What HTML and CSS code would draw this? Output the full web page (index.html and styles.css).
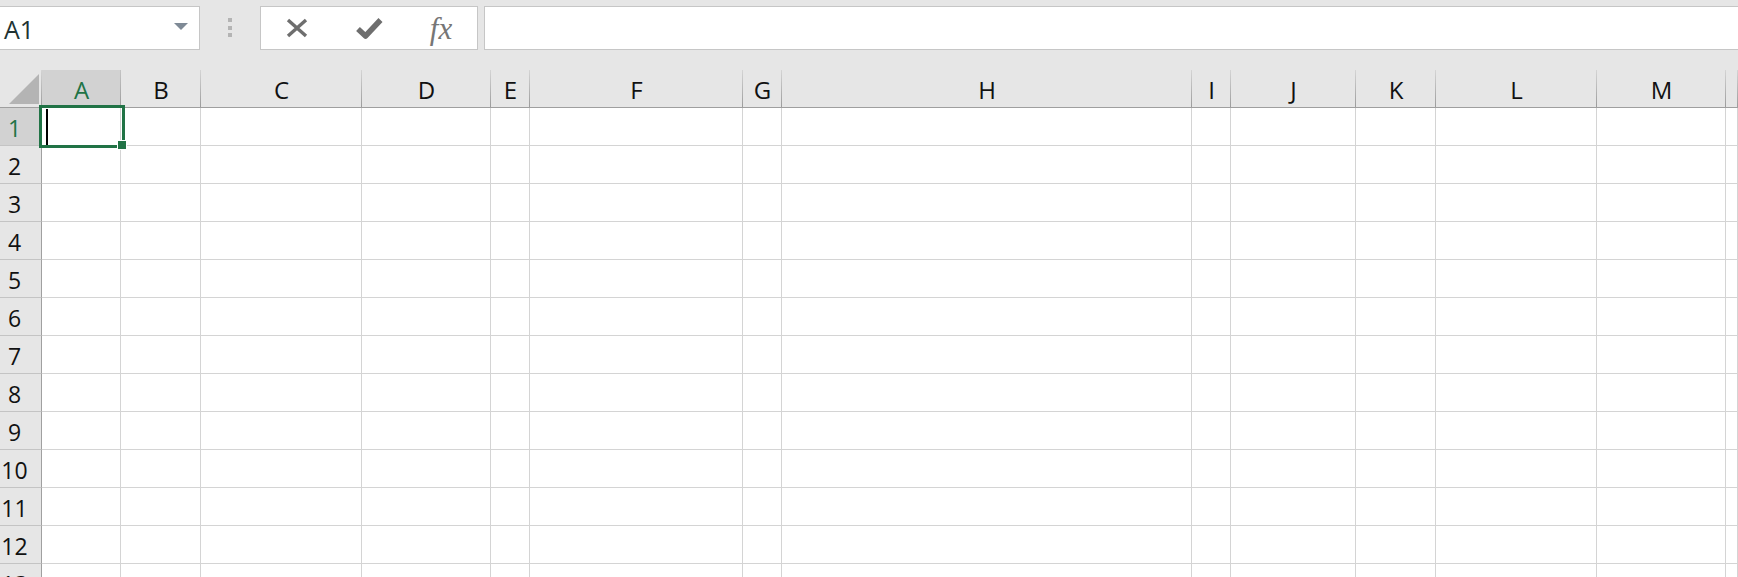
FILE: index.html
```html
<!DOCTYPE html>
<html lang="en">
<head>
<meta charset="utf-8">
<title>Sheet</title>
<link rel="stylesheet" href="styles.css">
</head>
<body>
<div class="toolbar">
  <div class="namebox"><span class="ref">A1</span><span class="caret"></span></div>
  <div class="grip"><i></i><i></i><i></i></div>
  <div class="fxbtns">
    <span class="btn"><svg width="24" height="20" viewBox="0 0 24 20"><path d="M3 2 L21 18 M21 2 L3 18" stroke="#6e6e6e" stroke-width="3.4" fill="none"/></svg></span>
    <span class="btn"><svg width="28" height="24" viewBox="0 0 28 24"><path d="M3 13 L10.5 20 L25.5 4" stroke="#6e6e6e" stroke-width="5.5" fill="none" stroke-linejoin="round"/></svg></span>
    <span class="btn fx">fx</span>
  </div>
  <div class="formula"></div>
</div>
<div class="sheet">
  <div class="row head">
    <div class="corner"><span class="tri"></span></div>
    <div class="ch sel">A</div><div class="ch">B</div><div class="ch">C</div><div class="ch">D</div><div class="ch">E</div><div class="ch">F</div><div class="ch">G</div><div class="ch">H</div><div class="ch">I</div><div class="ch">J</div><div class="ch">K</div><div class="ch">L</div><div class="ch">M</div><div class="ch"></div>
  </div>
  <div class="row">
    <div class="rh sel">1</div>
    <div class="c a1"><span class="cursor"></span><span class="selbox"></span><span class="handle"></span></div><div class="c"></div><div class="c"></div><div class="c"></div><div class="c"></div><div class="c"></div><div class="c"></div><div class="c"></div><div class="c"></div><div class="c"></div><div class="c"></div><div class="c"></div><div class="c"></div><div class="c"></div>
  </div>
  <div class="row"><div class="rh">2</div><div class="c"></div><div class="c"></div><div class="c"></div><div class="c"></div><div class="c"></div><div class="c"></div><div class="c"></div><div class="c"></div><div class="c"></div><div class="c"></div><div class="c"></div><div class="c"></div><div class="c"></div><div class="c"></div></div>
  <div class="row"><div class="rh">3</div><div class="c"></div><div class="c"></div><div class="c"></div><div class="c"></div><div class="c"></div><div class="c"></div><div class="c"></div><div class="c"></div><div class="c"></div><div class="c"></div><div class="c"></div><div class="c"></div><div class="c"></div><div class="c"></div></div>
  <div class="row"><div class="rh">4</div><div class="c"></div><div class="c"></div><div class="c"></div><div class="c"></div><div class="c"></div><div class="c"></div><div class="c"></div><div class="c"></div><div class="c"></div><div class="c"></div><div class="c"></div><div class="c"></div><div class="c"></div><div class="c"></div></div>
  <div class="row"><div class="rh">5</div><div class="c"></div><div class="c"></div><div class="c"></div><div class="c"></div><div class="c"></div><div class="c"></div><div class="c"></div><div class="c"></div><div class="c"></div><div class="c"></div><div class="c"></div><div class="c"></div><div class="c"></div><div class="c"></div></div>
  <div class="row"><div class="rh">6</div><div class="c"></div><div class="c"></div><div class="c"></div><div class="c"></div><div class="c"></div><div class="c"></div><div class="c"></div><div class="c"></div><div class="c"></div><div class="c"></div><div class="c"></div><div class="c"></div><div class="c"></div><div class="c"></div></div>
  <div class="row"><div class="rh">7</div><div class="c"></div><div class="c"></div><div class="c"></div><div class="c"></div><div class="c"></div><div class="c"></div><div class="c"></div><div class="c"></div><div class="c"></div><div class="c"></div><div class="c"></div><div class="c"></div><div class="c"></div><div class="c"></div></div>
  <div class="row"><div class="rh">8</div><div class="c"></div><div class="c"></div><div class="c"></div><div class="c"></div><div class="c"></div><div class="c"></div><div class="c"></div><div class="c"></div><div class="c"></div><div class="c"></div><div class="c"></div><div class="c"></div><div class="c"></div><div class="c"></div></div>
  <div class="row"><div class="rh">9</div><div class="c"></div><div class="c"></div><div class="c"></div><div class="c"></div><div class="c"></div><div class="c"></div><div class="c"></div><div class="c"></div><div class="c"></div><div class="c"></div><div class="c"></div><div class="c"></div><div class="c"></div><div class="c"></div></div>
  <div class="row"><div class="rh">10</div><div class="c"></div><div class="c"></div><div class="c"></div><div class="c"></div><div class="c"></div><div class="c"></div><div class="c"></div><div class="c"></div><div class="c"></div><div class="c"></div><div class="c"></div><div class="c"></div><div class="c"></div><div class="c"></div></div>
  <div class="row"><div class="rh">11</div><div class="c"></div><div class="c"></div><div class="c"></div><div class="c"></div><div class="c"></div><div class="c"></div><div class="c"></div><div class="c"></div><div class="c"></div><div class="c"></div><div class="c"></div><div class="c"></div><div class="c"></div><div class="c"></div></div>
  <div class="row"><div class="rh">12</div><div class="c"></div><div class="c"></div><div class="c"></div><div class="c"></div><div class="c"></div><div class="c"></div><div class="c"></div><div class="c"></div><div class="c"></div><div class="c"></div><div class="c"></div><div class="c"></div><div class="c"></div><div class="c"></div></div>
  <div class="row"><div class="rh">13</div><div class="c"></div><div class="c"></div><div class="c"></div><div class="c"></div><div class="c"></div><div class="c"></div><div class="c"></div><div class="c"></div><div class="c"></div><div class="c"></div><div class="c"></div><div class="c"></div><div class="c"></div><div class="c"></div></div>
</div>
</body>
</html>
```
FILE: styles.css
```css
* { box-sizing: border-box; }
html, body { margin: 0; height: 100%; }
body {
  background: #e6e6e6;
  font-family: "Open Sans", "Noto Sans", sans-serif;
  overflow: hidden;
}

/* formula bar */
.toolbar {
  display: flex;
  align-items: flex-start;
  height: 70px;
  padding-top: 6px;
}
.namebox {
  width: 200px;
  height: 44px;
  background: #fff;
  border: 1px solid #c6c6c6;
  border-left: none;
  display: flex;
  align-items: center;
  justify-content: space-between;
  padding: 0 11px 0 4px;
}
.ref {
  font-size: 25px;
  line-height: 40px;
  padding-top: 2px;
  color: #233;
}
.caret {
  width: 0;
  height: 0;
  border-left: 7px solid transparent;
  border-right: 7px solid transparent;
  border-top: 7px solid #7f8a96;
  margin-top: -4px;
}
.grip {
  margin: 12px 0 0 28px;
  display: flex;
  flex-direction: column;
  gap: 3.5px;
}
.grip i {
  display: block;
  width: 4px;
  height: 4px;
  background: #b4b4b4;
}
.fxbtns {
  margin-left: 28px;
  width: 218px;
  height: 44px;
  background: #fff;
  border: 1px solid #c6c6c6;
  display: flex;
}
.btn {
  width: 72px;
  display: flex;
  align-items: center;
  justify-content: center;
}
.fx {
  font-family: "Liberation Serif", "Times New Roman", serif;
  font-style: italic;
  font-size: 31px;
  color: #767676;
  padding-top: 1px;
}
.formula {
  flex: 1;
  margin-left: 6px;
  height: 44px;
  background: #fff;
  border: 1px solid #c6c6c6;
  border-right: none;
}

/* sheet grid */
.row {
  display: grid;
  grid-template-columns: 42px 79px 80px 161px 129px 39px 213px 39px 410px 39px 125px 80px 161px 129px 1fr;
  height: 38px;
}
.corner, .ch {
  background: linear-gradient(#d4d4d4, #9c9c9c) right top / 1px 100% no-repeat, #e6e6e6;
  border-bottom: 1px solid #9f9f9f;
}
.corner {
  display: flex;
  justify-content: flex-end;
  align-items: flex-end;
  padding: 0 3px 3px 0;
}
.tri {
  width: 30px;
  height: 30px;
  background: #b4b4b4;
  clip-path: polygon(100% 0, 100% 100%, 0 100%);
}
.ch {
  text-align: center;
  font-size: 24px;
  line-height: 35px;
  padding-top: 2px;
  color: #111;
}
.ch.sel {
  background: linear-gradient(#c4c4c4, #9c9c9c) right top / 1px 100% no-repeat, #d2d2d2;
  color: #217346;
}
.rh {
  background: #e6e6e6;
  border-right: 1px solid #a0a0a0;
  border-bottom: 1px solid #c4c4c4;
  font-size: 23px;
  line-height: 34px;
  padding: 3px 12px 0 0;
  text-align: center;
  color: #111;
}
.rh.sel {
  background: #d2d2d2;
  color: #217346;
}
.c {
  background: #fff;
  border-right: 1px solid #d4d4d4;
  border-bottom: 1px solid #d4d4d4;
}

/* active cell */
.a1 { position: relative; }
.selbox {
  position: absolute;
  left: -3px;
  top: -3px;
  width: 86px;
  height: 43px;
  border: 3px solid #217346;
}
.handle {
  position: absolute;
  left: 75px;
  top: 32px;
  width: 10px;
  height: 10px;
  background: #217346;
  border: 1px solid #fff;
}
.cursor {
  position: absolute;
  left: 4px;
  top: 1px;
  width: 2px;
  height: 36px;
  background: #000;
}
```
